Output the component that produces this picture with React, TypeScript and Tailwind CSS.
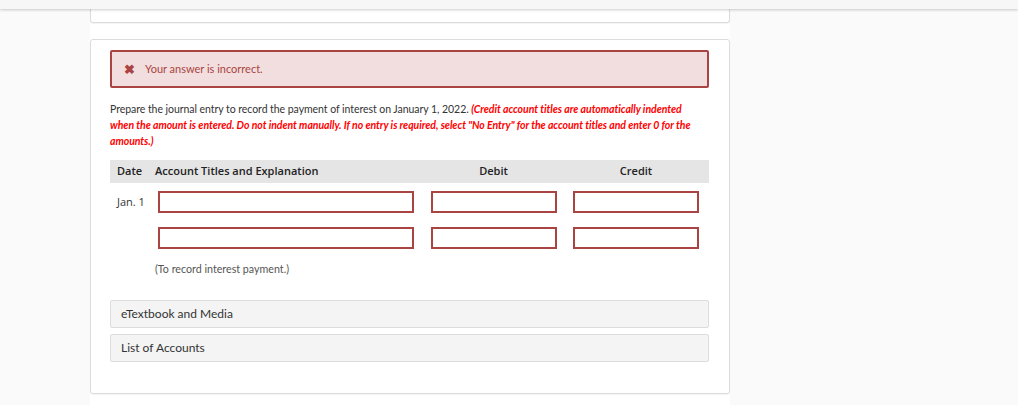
import React from 'react';

const lato = { fontFamily: 'Lato, "Open Sans", sans-serif' };

const Field: React.FC<{ className?: string }> = ({ className = '' }) => (
  <div className={`h-[22px] border-2 border-[#a94442] bg-white ${className}`} />
);

const JournalRow: React.FC<{ date?: string }> = ({ date }) => (
  <div className="grid grid-cols-[45px_267px_143px_142px] items-center">
    <div className="pl-[7px] text-[11px] text-[#333]" style={{ fontFamily: '"Open Sans", sans-serif' }}>
      {date}
    </div>
    <div className="pl-[3px]">
      <Field className="w-[256px]" />
    </div>
    <div className="flex justify-center">
      <Field className="w-[126px]" />
    </div>
    <div className="flex justify-center">
      <Field className="w-[126px]" />
    </div>
  </div>
);

const AccordionItem: React.FC<{ label: string }> = ({ label }) => (
  <div className="h-[28px] flex items-center pl-[10px] bg-[#f4f4f4] border border-[#dddddd] rounded-[2px] text-[12px] text-[#333]">
    {label}
  </div>
);

export default function App() {
  return (
    <div className="min-h-screen bg-[#fafafa]" style={lato}>
      <div className="relative z-10 h-[9px] bg-[#f7f7f7] shadow-[0_1px_3px_rgba(0,0,0,0.2)]" />
      <div className="ml-[90px] w-[640px] bg-white min-h-[396px]">
        <div className="h-[14px] border border-t-0 border-[#dcdcdc] rounded-b-[3px] shadow-[0_1px_1px_rgba(0,0,0,0.05)]" />
        <div className="h-[16px]" />
        <div className="h-[355px] border border-[#dcdcdc] rounded-[3px] shadow-[0_1px_1px_rgba(0,0,0,0.05)] pt-[10px] pl-[19px] pr-[20px]">
          <div className="h-[38px] flex items-center border-2 border-[#a94442] bg-[#f2dede] rounded-[2px] pl-[12px] text-[11px] text-[#a94442]">
            <span className="text-[13px] font-bold leading-none mr-[10px]">✖</span>
            <span>Your answer is incorrect.</span>
          </div>

          <p className="mt-[13px] text-[10.5px] leading-[16px] text-[#333] pr-[14px] tracking-[-0.05px]">
            Prepare the journal entry to record the payment of interest on January 1, 2022.{' '}
            <span className="text-[#ff0000] font-bold italic">
              (Credit account titles are automatically indented when the amount is entered. Do not indent manually. If no entry is required, select "No Entry" for the account titles and enter 0 for the amounts.)
            </span>
          </p>

          <div
            className="mt-[11px] h-[23px] grid grid-cols-[45px_267px_143px_142px] items-center bg-[#e5e5e5] text-[11px] font-semibold text-[#222]"
            style={{ fontFamily: '"Open Sans", sans-serif' }}
          >
            <div className="pl-[7px]">Date</div>
            <div>Account Titles and Explanation</div>
            <div className="text-center">Debit</div>
            <div className="text-center">Credit</div>
          </div>

          <div className="mt-[8px] flex flex-col gap-[14px]">
            <JournalRow date="Jan. 1" />
            <JournalRow />
          </div>

          <div className="mt-[12px] pl-[45px] text-[10.7px] text-[#555]">(To record interest payment.)</div>

          <div className="mt-[23px] flex flex-col gap-[6px]">
            <AccordionItem label="eTextbook and Media" />
            <AccordionItem label="List of Accounts" />
          </div>
        </div>
      </div>
    </div>
  );
}
